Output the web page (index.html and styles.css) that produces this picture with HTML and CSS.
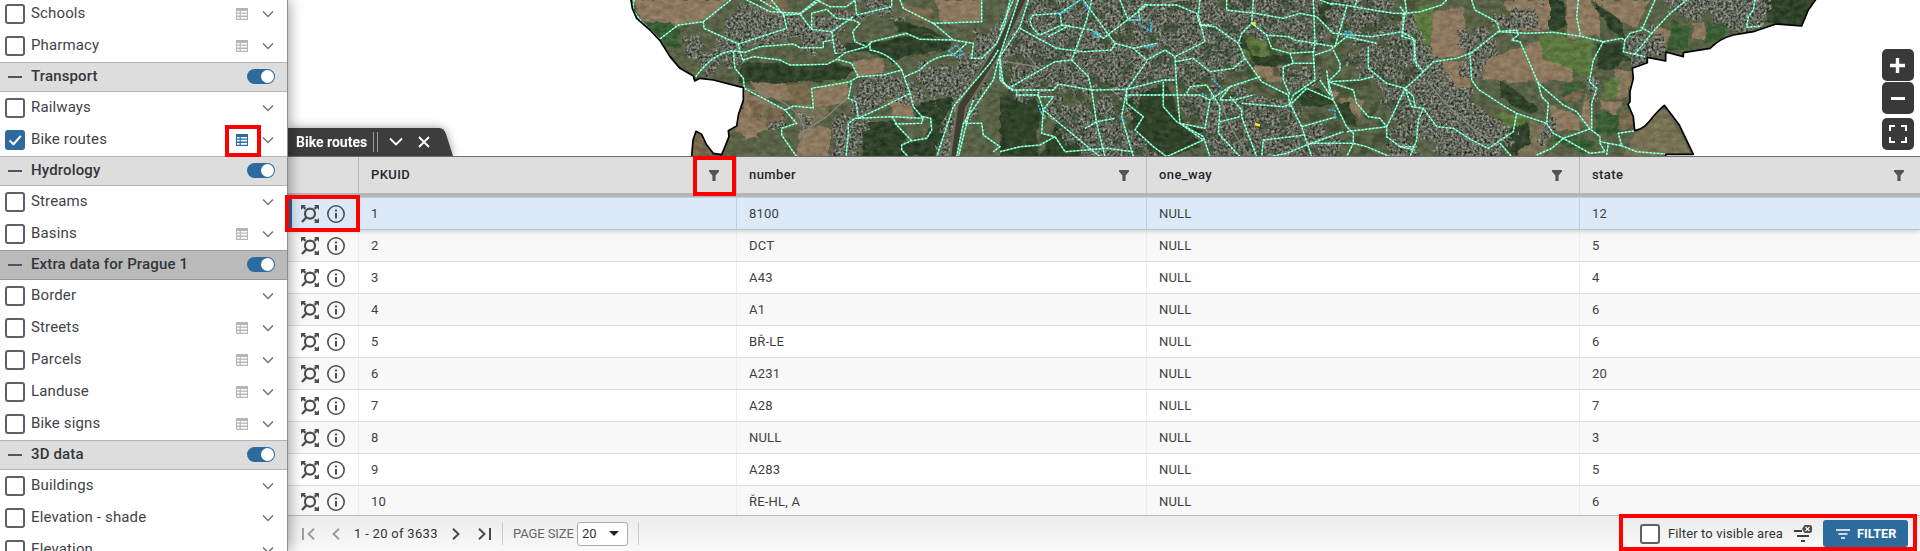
FILE: index.html
```html
<!DOCTYPE html>
<html lang="en">
<head>
<meta charset="utf-8">
<title>Bike routes</title>
<link rel="stylesheet" href="styles.css">
</head>
<body>
<svg class="defs" width="0" height="0" aria-hidden="true">
  <symbol id="table" viewBox="0 0 12 12"><path fill="currentColor" fill-rule="evenodd" d="M0 0h12v12H0zM1 3v1.6h2.6V3zM4.8 3v1.6H11V3zM1 5.8v1.6h2.6V5.8zM4.8 5.8v1.6H11V5.8zM1 8.9v1.8h2.6V8.9zM4.8 8.9v1.8H11V8.9z"/></symbol>
  <symbol id="chev" viewBox="0 0 12 8"><path d="M1 1.5l5 5 5-5" fill="none" stroke="currentColor" stroke-width="1.5"/></symbol>
  <symbol id="funnel" viewBox="0 0 10 11"><path d="M0 0h10v1.4L6.6 5.6V11H3.4V5.6L0 1.4z" fill="currentColor"/></symbol>
  <symbol id="focus" viewBox="0 0 18 18"><g fill="none" stroke="currentColor"><circle cx="9" cy="8.6" r="5" stroke-width="2.2"/><path d="M5.4 12.3L1 17" stroke-width="2.4"/></g><path d="M0 0h5L3.600 1.400l1.700 1.700-1.600 1.600L2 3 0 5zM18 0h-5l1.400 1.400-1.700 1.700 1.600 1.600L16 3l2 2zM18 18h-5l1.400-1.400-1.400-1.400 1.500-1.500L16 15.100l2-2z" fill="currentColor"/></symbol>
  <symbol id="info" viewBox="0 0 18 18"><circle cx="9" cy="9" r="8.2" fill="none" stroke="currentColor" stroke-width="1.6"/><path d="M8 4.5h2v2H8zM8 8h2v5.500H8z" fill="currentColor"/></symbol>
</svg>
<div class="app">
  <aside class="side">
    <div class="layer"><i class="box"></i><span>Schools</span><svg class="tbl"><use href="#table"/></svg><svg class="chev"><use href="#chev"/></svg></div>
    <div class="layer"><i class="box"></i><span>Pharmacy</span><svg class="tbl"><use href="#table"/></svg><svg class="chev"><use href="#chev"/></svg></div>
    <div class="group"><i class="minus"></i><span>Transport</span><i class="switch"></i></div>
    <div class="layer"><i class="box"></i><span>Railways</span><svg class="chev"><use href="#chev"/></svg></div>
    <div class="layer"><i class="box on"><svg width="20" height="20" viewBox="0 0 20 20"><path d="M4.5 10.5l4 3.7 7.3-8.4" fill="none" stroke="#fff" stroke-width="2"/></svg></i><span>Bike routes</span><svg class="tbl active"><use href="#table"/></svg><svg class="chev"><use href="#chev"/></svg></div>
    <div class="group"><i class="minus"></i><span>Hydrology</span><i class="switch"></i></div>
    <div class="layer"><i class="box"></i><span>Streams</span><svg class="chev"><use href="#chev"/></svg></div>
    <div class="layer"><i class="box"></i><span>Basins</span><svg class="tbl"><use href="#table"/></svg><svg class="chev"><use href="#chev"/></svg></div>
    <div class="group dark"><i class="minus"></i><span>Extra data for Prague 1</span><i class="switch"></i></div>
    <div class="layer"><i class="box"></i><span>Border</span><svg class="chev"><use href="#chev"/></svg></div>
    <div class="layer"><i class="box"></i><span>Streets</span><svg class="tbl"><use href="#table"/></svg><svg class="chev"><use href="#chev"/></svg></div>
    <div class="layer"><i class="box"></i><span>Parcels</span><svg class="tbl"><use href="#table"/></svg><svg class="chev"><use href="#chev"/></svg></div>
    <div class="layer"><i class="box"></i><span>Landuse</span><svg class="tbl"><use href="#table"/></svg><svg class="chev"><use href="#chev"/></svg></div>
    <div class="layer"><i class="box"></i><span>Bike signs</span><svg class="tbl"><use href="#table"/></svg><svg class="chev"><use href="#chev"/></svg></div>
    <div class="group"><i class="minus"></i><span>3D data</span><i class="switch"></i></div>
    <div class="layer"><i class="box"></i><span>Buildings</span><svg class="chev"><use href="#chev"/></svg></div>
    <div class="layer"><i class="box"></i><span>Elevation - shade</span><svg class="chev"><use href="#chev"/></svg></div>
    <div class="layer"><i class="box"></i><span>Elevation</span><svg class="chev"><use href="#chev"/></svg></div>
  </aside>
  <main class="main">
    <div class="map">
      <svg class="mapsvg" width="1632" height="156" viewBox="288 0 1632 156">
        <defs>
          <path id="land" d="M92-5L97 25 110 55 150 90 180 122 210 170 240 205 280 228 284 243 300 235 340 240 430 263V300L415 345 410 378 385 392 387 410 375 440 365 464 340 460 320 435 305 403 288 394 279 420 274 480H3197V463H3280L3238 375 3193 316C3150 350 3145 385 3104 392L3100 350 3084 313 3090 305V275L3100 235 3097 205 3142 188V172L3197 183V156L3250 170V158L3330 145Q3360 115 3400 105L3460 95 3528 72 3605 78 3625 30 3650-5Z"/>
          <clipPath id="landclip"><use href="#land"/></clipPath>
          <filter id="urban" x="0" y="0" width="1" height="1" color-interpolation-filters="sRGB">
            <feTurbulence type="fractalNoise" baseFrequency=".13" numOctaves="3" seed="4" result="n"/>
            <feColorMatrix in="n" values=".95 .2 0 0 -.18  .95 .2 0 0 -.165  .95 .2 0 0 -.2  0 0 0 0 .85" result="g"/>
            <feTurbulence type="fractalNoise" baseFrequency=".02" numOctaves="4" seed="8" result="w"/>
            <feDisplacementMap in="SourceGraphic" in2="w" scale="90" xChannelSelector="R" yChannelSelector="G" result="d"/>
            <feComposite in="g" in2="d" operator="in"/>
          </filter>
          <filter id="green" x="0" y="0" width="1" height="1" color-interpolation-filters="sRGB">
            <feTurbulence type="fractalNoise" baseFrequency=".03" numOctaves="4" seed="21"/>
            <feColorMatrix values="0 0 0 0 .2  0 0 0 0 .27  0 0 0 0 .16  0 6 0 0 -3"/>
          </filter>
          <filter id="rough" x="0" y="0" width="1" height="1" color-interpolation-filters="sRGB">
            <feTurbulence type="fractalNoise" baseFrequency=".03" numOctaves="4" seed="3" result="w"/>
            <feDisplacementMap in="SourceGraphic" in2="w" scale="22" xChannelSelector="R" yChannelSelector="G"/>
          </filter>
          <filter id="grain" x="0" y="0" width="1" height="1" color-interpolation-filters="sRGB">
            <feTurbulence type="fractalNoise" baseFrequency=".05 .07" numOctaves="4" seed="11"/>
            <feColorMatrix values="1.2 0 0 0 -.2  1.2 0 0 0 -.2  1.1 0 0 0 -.22  0 0 0 0 .16"/>
          </filter>
          <g id="routes">
            <path d="M102 0L98 30 125 65 178 118 235 75 310 65 392 0M310 65L312 85 415 132 560 85 550 40 480 0M440 0L510 35 600 40 650 0 690 20H740L765 0 770 45 875 20V0M515 0L550 45 600 42 635 88 695 95 760 50M600 42L660 0M635 88V40L680 28 710 55 760 60 780 70 758 95 765 125 800 140M415 132L420 155 430 185M287 230Q340 160 395 153L435 157 480 140 580 132 600 143H670V125L698 120V98M695 95L705 160H715M400 155L405 205 430 235 433 265 490 295 555 330 590 370 545 385 545 405 590 470M430 180L460 170 540 180 570 195 680 193 710 178 735 158 800 140 815 125 920 100 960 118 1060 120M555 330L580 318 640 324 635 265 750 245 775 230 755 190 710 178M775 230L850 225 905 210Q870 160 810 150V125M905 210L930 280 850 320 775 355 768 305 745 295 755 245M930 280L940 320 970 355 875 350 765 355 745 370V400L738 470M875 350L890 372 965 370 970 350 992 355 995 390 980 415 935 422 905 435 905 450 925 470M885 370L935 422M900 0L910 25 1000 70 1060 120 1120 130 1115 175 1145 175 1190 130 1215 70 1230 0M1000 70L1145 65V0M915 230L960 210Q1000 165 1060 165L1100 130M1255 0L1195 180 1180 240 1090 370 1070 470M1195 150L1170 190 1060 320 1010 470M1120 300L1095 370 1145 370 1150 405 1200 440 1180 455M1200 180L1210 250 1240 270M1110 330L1075 470"/>
            <path transform="translate(1200 0)" d="M0 90L40 0M0 230L25 265 165 185 215 180 260 60 275 0M85 0L60 80 0 170V240L35 270H160L175 252 275 270 380 268 490 240 525 240M60 85L170 145 250 155 335 150 345 130 250 0M180 40L185 75 120 105Q75 70 100 45L180 40 240 0M185 75L275 90 310 115 395 50 440 15 530 15 590 40 600 75 645 80 715 130 735 175 785 245 865 285 870 320M345 130L400 145 440 180 495 150 525 170 530 260 540 370 615 385 630 300 600 285H540L380 285M145 110L210 75M360 0L385 60 420 60 415 30 440 10M600 0L595 45 615 125 525 170M525 185L580 175 630 215 700 205 735 175M680 0V30L765 40 850 55 900 40 950 50 1000 100 1115 110 1205 95 1240 115 1250 200M760 0L755 70 725 100 715 130M755 70L800 105 865 110 885 120 945 130 1005 140 1040 20M940 0L945 130 940 160 945 240 880 285 870 310 905 380 935 470M800 105L815 145 870 160 940 155M870 160L880 190 850 200 850 240 870 285M875 190L945 190M1000 150L1020 190 1020 210 985 245 1000 300 1040 380 1060 400V430L1040 470M945 165L990 150 1040 110 1130 130M1105 140V205L1160 250 1215 265 1240 290 1245 320M1120 230L1080 240 985 245 1060 270 1070 310 1105 350 1140 355 1160 380 1160 410 1200 440H1250M1215 265L1180 340 1160 380 1040 395M960 240L990 285 980 210M780 230L690 260 630 300M560 280L570 260 620 255 660 320 655 400 720 470M690 260L660 300 700 300 760 285M690 290L725 330V350L770 470M660 365L720 350M725 310L850 320 875 310 920 265 1000 300M905 380L1010 350M915 405L790 420 785 470M810 470L860 460 920 435 1030 395M930 430L1060 430 1100 440 1170 470M540 370L610 420 500 470 460 440 405 390 430 350 380 310 380 270 365 350 400 470M490 245V320L530 365 610 410 630 470M380 268L440 185M215 180L245 210 265 230 275 270 290 370 315 470M115 275V290L160 290 130 330 125 400 165 410M50 270V285H115L130 330 275 450 300 470M0 455L60 440 120 435 165 410 195 455 320 445 400 455M255 385L290 365 345 355M400 145L470 130M600 75L635 75M1060 20L1180 40 1220 40 1215 0M1215 40L1205 110M995 10L1065 20 1070 0M960 0L1000 15"/>
            <path transform="translate(2400 0)" d="M0 20L15 40 60 35 125 15 140 0M10 40L8 110 45 120 42 180 70 215 100 185 170 175 215 158 295 95M215 0L225 30 290 65 300 95 380 100 460 97 540 108 610 125 665 115 675 120 690 100 725 90 765 0M295 95L350 90 355 105 335 120 360 125 385 180 415 250 490 315 530 335 568 385 600 410M535 0L530 50 542 108M610 125L580 180 568 245 590 265 575 310 575 385 490 415 455 445 410 465M415 250L425 290 445 310 440 370 380 350 350 340 315 320 235 268 215 240 210 160M70 215L45 240 15 265 35 320 70 325 110 380 160 385 215 420 265 445 340 395 350 340M70 325L55 360 50 420 30 470M440 370L460 400 490 415 570 460 615 455 600 430 600 410M300 430L335 470M0 440L45 450M600 425L625 430 620 465M625 430L665 437 655 400 704 392M665 437L710 455 797 462M675 120L670 155 735 170M705 162L755 100 720 80M755 100L810 40 860 0M1065 0L1060 30 1045 50 1040 82 1085 78"/>
          </g>
        </defs>
        <g transform="scale(.333333)">
        <g transform="translate(1800 0)">
          <g clip-path="url(#landclip)">
            <rect x="80" y="-10" width="3600" height="500" fill="#505b3d"/>
            <g filter="url(#rough)">
              <rect x="60" y="-30" width="3640" height="540" fill="#566043"/>
              <g fill="#937c60">
                <path d="M100 0H390L330 60 240 70 210 105 130 60ZM450 240L560 245 570 300 480 295ZM420 330L480 340 470 420 400 390ZM760 185L850 175 850 225 770 230ZM860 300L940 285 940 360 880 350ZM640 265L750 245 745 300 640 325ZM430 270L540 320 550 360 430 420ZM600 390L690 380 690 470 590 470Z"/>
                <path d="M1010 0L1145 0V65L1020 70ZM1960 195L2045 190 2050 245 1980 240ZM2190 270L2290 300 2280 360 2180 280Z"/>
                <path d="M2440 50L2590 20 2600 160 2510 185 2450 110ZM2510 190L2600 180 2610 270 2530 250ZM2650 180L2790 130 2830 250 2650 240ZM2830 110L2910 170 2920 245 2820 245 2770 140ZM2710 0L2860 0 2860 90 2770 95ZM2900 0H3000V110H2900ZM2840 310L2940 350 2940 390 2860 390ZM2960 270L2980 380 2940 360ZM2990 0H3150L3110 80 3050 60ZM3000 300L3070 310 3050 340 3000 330ZM3040 210L3100 210 3080 290 3050 300ZM3160 80L3210 90 3190 160 3160 140ZM3275 70H3320V120H3280Z"/>
              </g>
              <g fill="#7b6a4c"><path d="M450 300L560 330 520 390 450 350ZM560 255L640 255 630 320 570 310ZM2900 250H2960L2930 310 2890 300ZM3060 340L3100 340V390L3060 380ZM500 0H560V80L480 50ZM900 10L1000 30 990 70 920 50ZM270 390H300L340 470H270Z"/></g>
              <g fill="#7a7355"><path d="M3104 395L3190 320 3280 470H3070ZM2790 360L2860 380 2830 470H2750ZM600 300L690 330 640 390 580 370Z"/></g>
              <g fill="#315b2f"><path d="M130 60L235 75 240 150 180 130ZM3220 60L3270 90 3260 150 3200 150ZM3320 70H3380L3370 120 3320 130ZM2900 250H2990L2880 290ZM2990 340H3060V400H2990ZM2870 400L2990 430 2960 460 2860 420Z"/></g>
              <g fill="#5b7b3a"><path d="M1920 110L2000 120 2010 170 1930 170ZM650 205L750 210 740 250 640 240ZM2810 100L2980 120 2970 240 2900 200 2830 180ZM2450 20L2500 10 2490 180 2450 120ZM2680 340L2780 350 2760 440 2700 440ZM2030 130L2110 120 2120 150 2050 160ZM1420 300L1480 300 1470 340ZM3010 250L3060 230 3050 290 3010 300Z"/></g>
              <g fill="#263b22">
                <path d="M420 190L540 185 590 200 700 190 760 205 730 240 570 250 420 245ZM740 130L820 125 950 105 1050 120 1050 150 930 165 880 190 800 150 700 170ZM880 60L1000 90 1040 110 900 100ZM940 310L1060 290 1010 470 900 470 900 430 980 410 1000 360 950 350ZM780 370L880 360 920 410 900 470H790Z"/>
                <path d="M1200 290L1300 280 1340 340 1310 390 1320 470H1200ZM1390 340L1480 470H1320ZM1575 295L1640 270 1700 250 1740 360 1810 390 1800 440 1700 470 1640 450 1600 400ZM1950 170L2070 165 2080 195 1970 200ZM2080 285L2150 260 2200 310 2170 320 2110 320ZM2150 0L2200 10 2170 90 2150 50ZM1850 80L1930 110 1960 170 1910 120Z"/>
                <path d="M2700 430L2740 380 2780 370 2790 430 2740 470ZM2990 130L3080 130 3060 200 2990 215ZM2850 0H2890L2900 80 2850 90ZM2970 0L3060 60 3080 130 3050 110ZM3490-10L3650-10 3600 90 3480 60ZM3190 190L3060 180 3050 160ZM2200 300L2250 310 2270 380 2240 380ZM2700 240L2760 280 2820 330 2780 340 2700 290Z"/>
              </g>
            </g>
            <rect x="80" y="-10" width="3600" height="500" filter="url(#grain)"/>
            <g filter="url(#urban)">
              <rect x="60" y="-40" width="1" height="560"/><rect x="3699" y="-40" width="1" height="560"/>
              <path d="M400 20L540 10 580 60 700 40 790 20 800 50 720 80 720 140 600 150 570 110 430 150 370 110ZM250 160L420 110 440 190 330 210ZM780 230L900 220 970 270 960 330 860 310 790 370 760 310ZM940 210L1060 190 1090 280 1000 300ZM700 350H790V490H700ZM260 100H300V160H260ZM790 0H900V50H790ZM1090 180L1200 50 1230 130 1110 360 1040 490 1010 490ZM500 350H560V380H500ZM600 340H650V380H600Z"/>
              <path d="M1220-40H1820L1920 60 1920 120 1950 200 1800 250 1720 250 1590 290 1400 280 1240 300 1220 180ZM1880-40H2140L2180 80 2150 160 2000 140 1900 100ZM1330 300L1600 300 1600 380 1680 490 1470 490 1350 380ZM1730 300L1900 260 2090 310 2110 370 2230 410 2230 490H1850L1780 370ZM2200-40H2380V100L2260 140 2180 110ZM2040 200H2160V270H2060ZM2240 170L2370 120 2440 250 2380 350 2310 250Z"/>
              <path d="M2350 50L2450 60 2500 170 2630 310 2750 390 2680 490H2550L2470 420 2400 440V200ZM2590 100L2680 80 2690 130 2640 230 2580 210ZM2660 50L2830 20 2820 90 2740 100ZM3090 90L3170 100 3190 160 3120 200 3070 150ZM3170-40H3500V90H3420L3370 60 3220 50ZM2810 370H2870V420H2810ZM2960 240H3000V290H2960ZM2370 310L2470 320 2440 490H2370Z"/>
            </g>
            <rect x="1200" y="-10" width="1250" height="500" filter="url(#green)" opacity=".6"/>
            <g fill="none" stroke="#85867c" stroke-width="4"><path d="M430 263Q590 300 610 380L612 470M600 400L680 350 745 290M1190 180L1310 200 1280 160M1860 270Q1860 350 1950 470M1640 60Q1660 0 1760 0M2480 240Q2560 350 2680 430"/></g>
            <path d="M1270-10L1200 140 1085 320 1062 480" fill="none" stroke="#6b6f5a" stroke-width="32"/>
            <path d="M1270-10L1200 140 1085 320 1062 480" fill="none" stroke="#403e2f" stroke-width="20"/>
            <use href="#routes" class="halo"/>
            <use href="#routes" class="dash"/>
            <g fill="none" stroke="#49b9e3" stroke-width="5" stroke-dasharray="7 3"><path d="M1046 152L1070 135 1090 160 1070 172ZM1370 40L1400 35 1430 5M1450 5L1470 35M1480 95L1500 100 1490 115ZM1585 60L1650 60 1655 95 1620 75M1640 140L1670 135M1835 235L1865 265M1805 280L1820 288M2235 95H2255V106H2235ZM2185 330H2205V360M1565 350L1575 370M1315 315L1325 340"/></g>
            <path d="M1963 66V77M1965 372L1980 376" stroke="#ffec16" stroke-width="7"/>
          </g>
          <use href="#land" fill="none" stroke="#000" stroke-width="5" stroke-linejoin="round"/>
        </g>
        </g>
      </svg>
      <div class="zooms">
        <div class="zb"><svg width="32" height="32"><path d="M8 16.5h15M15.5 9v15" stroke="#fff" stroke-width="3.4"/></svg></div>
        <div class="zb"><svg width="32" height="32"><path d="M9 16.5h14" stroke="#fff" stroke-width="3"/></svg></div>
        <div class="zb full"><svg width="32" height="32"><path d="M8 13V8h5M19 8h5v5M24 19v5h-5M13 24H8v-5" fill="none" stroke="#fff" stroke-width="2"/></svg></div>
      </div>
      <div class="tab">
        <svg class="tabbg" width="166" height="28" viewBox="0 0 166 28"><path d="M0 0H151Q156 0 158 6L165 28H0Z" fill="#3d3d3d"/></svg>
        <b>Bike routes</b><i class="bars"></i>
        <svg class="t1" width="14" height="10"><path d="M1 1.500l6 6 6-6" fill="none" stroke="#fff" stroke-width="1.900"/></svg>
        <svg class="t2" width="12" height="12"><path d="M1 1l10 10M11 1L1 11" stroke="#fff" stroke-width="1.800"/></svg>
      </div>
    </div>
    <div class="thead"><div></div><div>PKUID<svg><use href="#funnel"/></svg></div><div>number<svg><use href="#funnel"/></svg></div><div>one_way<svg><use href="#funnel"/></svg></div><div>state<svg><use href="#funnel"/></svg></div></div>
    <div class="rows">
      <div class="row sel"><div class="act"><svg><use href="#focus"/></svg><svg><use href="#info"/></svg></div><div>1</div><div>8100</div><div>NULL</div><div>12</div></div>
      <div class="row"><div class="act"><svg><use href="#focus"/></svg><svg><use href="#info"/></svg></div><div>2</div><div>DCT</div><div>NULL</div><div>5</div></div>
      <div class="row"><div class="act"><svg><use href="#focus"/></svg><svg><use href="#info"/></svg></div><div>3</div><div>A43</div><div>NULL</div><div>4</div></div>
      <div class="row"><div class="act"><svg><use href="#focus"/></svg><svg><use href="#info"/></svg></div><div>4</div><div>A1</div><div>NULL</div><div>6</div></div>
      <div class="row"><div class="act"><svg><use href="#focus"/></svg><svg><use href="#info"/></svg></div><div>5</div><div>BŘ-LE</div><div>NULL</div><div>6</div></div>
      <div class="row"><div class="act"><svg><use href="#focus"/></svg><svg><use href="#info"/></svg></div><div>6</div><div>A231</div><div>NULL</div><div>20</div></div>
      <div class="row"><div class="act"><svg><use href="#focus"/></svg><svg><use href="#info"/></svg></div><div>7</div><div>A28</div><div>NULL</div><div>7</div></div>
      <div class="row"><div class="act"><svg><use href="#focus"/></svg><svg><use href="#info"/></svg></div><div>8</div><div>NULL</div><div>NULL</div><div>3</div></div>
      <div class="row"><div class="act"><svg><use href="#focus"/></svg><svg><use href="#info"/></svg></div><div>9</div><div>A283</div><div>NULL</div><div>5</div></div>
      <div class="row"><div class="act"><svg><use href="#focus"/></svg><svg><use href="#info"/></svg></div><div>10</div><div>ŘE-HL, A</div><div>NULL</div><div>6</div></div>
    </div>
    <footer class="foot">
      <svg class="first" width="13" height="12"><path d="M1 0v12M12 .7L6.5 6l5.5 5.300" fill="none" stroke="#9b9b9b" stroke-width="1.900"/></svg>
      <svg class="prev" width="8" height="12"><path d="M7 .7L1.500 6 7 11.300" fill="none" stroke="#9b9b9b" stroke-width="1.900"/></svg>
      <span class="range">1 - 20 of 3633</span>
      <svg class="next" width="8" height="12"><path d="M1 .7L6.500 6 1 11.300" fill="none" stroke="#4a4a4a" stroke-width="2"/></svg>
      <svg class="last" width="13" height="12"><path d="M1 .7L6.500 6 1 11.300M12 0v12" fill="none" stroke="#4a4a4a" stroke-width="2"/></svg>
      <i class="sep"></i>
      <span class="ps">PAGE SIZE</span>
      <span class="select">20<svg width="10" height="5"><path d="M0 0h10L5 5z" fill="#222"/></svg></span>
      <i class="sep"></i>
      <div class="filters">
        <i class="box"></i><span>Filter to visible area</span>
        <svg class="clear" width="18" height="18"><path d="M0 6h8M3 11h12M7 16h4" stroke="#3e3e3e" stroke-width="2"/><path d="M8 4L10.500 0H16q2 0 2 2v4q0 2-2 2h-5.500z" fill="#4d4d4d"/><path d="M11.500 2l4 4M15.500 2l-4 4" stroke="#fff" stroke-width="1.200"/></svg>
        <b class="btn"><svg width="14" height="10"><path d="M0 1h14M2.500 5h9M5 9h4" stroke="#fff" stroke-width="1.700"/></svg>FILTER</b>
      </div>
    </footer>
  </main>
</div>
<div class="mark m1"></div><div class="mark m2"></div><div class="mark m3"></div><div class="mark m4"></div>
</body>
</html>
```
FILE: styles.css
```css
*{box-sizing:border-box}
body{margin:0;width:1920px;height:551px;overflow:hidden;background:#fff;font-family:Roboto,"Liberation Sans",sans-serif;color:#333;position:relative}
svg{display:block;flex:none}
.defs{position:absolute}
i{font-style:normal;flex:none}
.app{display:flex;height:551px}
.side{width:288px;flex:none;height:551px;overflow:hidden;border-right:1px solid #8d8d8d;background:#fff;position:relative;z-index:3;box-shadow:0 0 14px rgba(0,0,0,.45)}
.side>:first-child{margin-top:-2px}
.layer,.group{display:flex;align-items:center;font-size:15px;letter-spacing:.14px}
.layer{height:32px;padding:0 13px 0 5px;color:#3f4348}
.layer span,.group span{margin-left:6px;margin-top:-2px;flex:1;white-space:nowrap}
.group{height:30px;padding:0 12px 0 8px;background:#ddd;border-top:1px solid #b5b5b5;border-bottom:1px solid #b5b5b5;font-weight:500;color:#33363a}
.group.dark{background:#bababa;border-color:#999}
.group span{margin-left:9px}
.minus{width:14px;height:2px;background:#555}
.switch{width:28px;height:15px;border-radius:8px;background:#2d6b9f;display:flex;justify-content:flex-end;padding:1px;margin-top:-1px}
.switch:after{content:"";width:13px;height:13px;border-radius:50%;background:#fff}
.box{width:20px;height:20px;border:2px solid #5d6268;border-radius:3px;background:#fff}
.box.on{border:0;background:#2d6b9f}
.tbl{width:12px;height:12px;color:#b5b5b5}
.tbl.active{color:#2d6b9f}
.chev{width:12px;height:8px;margin-left:14px;color:#757575}
.main{flex:1;display:flex;flex-direction:column;min-width:0}
.map{height:156px;position:relative;overflow:hidden;background:#fff}
.halo,.dash{fill:none;stroke:#3fd79c;stroke-width:4.6;stroke-linejoin:round}
.dash{stroke:#e2fff3;stroke-width:3.8;stroke-dasharray:5 6}
.zooms{position:absolute;right:6px;top:49px;display:flex;flex-direction:column;gap:1px}
.zb{width:32px;height:32px;border-radius:5px;background:#393939}
.zb.full{margin-top:3px}
.tab{position:absolute;left:0;top:128px;height:28px;display:flex;align-items:center;padding-left:8px;filter:drop-shadow(0 0 5px rgba(0,0,0,.4));color:#fff;font-size:14px}
.tabbg{position:absolute;left:0;top:0}
.tab>:not(.tabbg){position:relative}
.tab b{width:69px;white-space:nowrap}
.bars{width:5px;height:20px;border:solid #999;border-width:0 1px;margin-left:8px}
.t1{margin-left:11px}.t2{margin-left:15px}
.thead,.row{display:grid;grid-template-columns:71px 378px 410px 433px 1fr}
.thead{height:41px;background:#dedede;border-top:1px solid #6d6d6d;border-bottom:4px solid #b5b5b5;font-size:13px;font-weight:500;letter-spacing:.4px;color:#25282c;position:relative}
.thead>div{display:flex;align-items:center;justify-content:space-between;padding:0 17px 2px 12px;border-right:1px solid #bbb}
.thead>div:last-child{padding-right:16px;border:0}
.thead svg{width:10px;height:11px;color:#555;margin-top:2px}
.rows{height:318px;overflow:hidden}
.row{height:32px;border-bottom:1px solid #dcdcdc;font-size:13px;letter-spacing:.2px;color:#3c3f43}
.row:nth-child(even){background:#f8f8f8}
.row>div{display:flex;align-items:center;padding:0 12px 1px;border-right:1px solid #ededed}
.row>div:last-child{border-right:0}
.row>.act{padding:0 13px;gap:8px;color:#4d4d4d}
.act svg{width:18px;height:18px}
.row.sel{height:33px;background:#dceaf7;border-top:1px solid #b9cfe6;border-bottom:1px solid #aec6de;position:relative;box-shadow:0 1px 5px rgba(0,0,0,.2)}
.row.sel>div{border-color:#b9cfe6}
.row.sel>.act{box-shadow:inset 4px 0 #2d6b9f}
.foot{height:36px;border-top:1px solid #bcbcbc;background:linear-gradient(#ececec,#f9f9f9);display:flex;align-items:center;padding-left:14px;font-size:13px}
.prev{margin-left:17px}
.range{width:84px;margin-left:14px;letter-spacing:.3px;white-space:nowrap}
.next{margin-left:14px}
.last{margin-left:18px}
.sep{width:1px;height:23px;background:#ccc;margin-left:11px}
.ps{width:58px;margin-left:10px;color:#666;white-space:nowrap;letter-spacing:-.1px}
.select{width:51px;height:24px;border:1px solid #aaa;border-radius:3px;background:#fff;margin-left:6px;display:flex;align-items:center;justify-content:space-between;padding:0 8px 0 4px}
.select+.sep{margin-left:10px}
.filters{margin-left:auto;display:flex;align-items:center;padding-right:12px}
.filters span{margin-left:8px;width:116px;letter-spacing:.12px;white-space:nowrap}
.clear{margin-left:10px}
.btn{width:85px;height:27px;border-radius:3px;background:#2d6b9f;color:#fff;margin-left:11px;display:flex;align-items:center;padding-left:13px;gap:7px;font-size:12.7px}
.mark{position:absolute;z-index:9;border:4px solid red}
.m1{left:225px;top:125px;width:36px;height:32px}
.m2{left:693px;top:156px;width:43px;height:40px}
.m3{left:285px;top:195px;width:75px;height:37px}
.m4{left:1619px;top:514px;width:298px;height:37px}
```
